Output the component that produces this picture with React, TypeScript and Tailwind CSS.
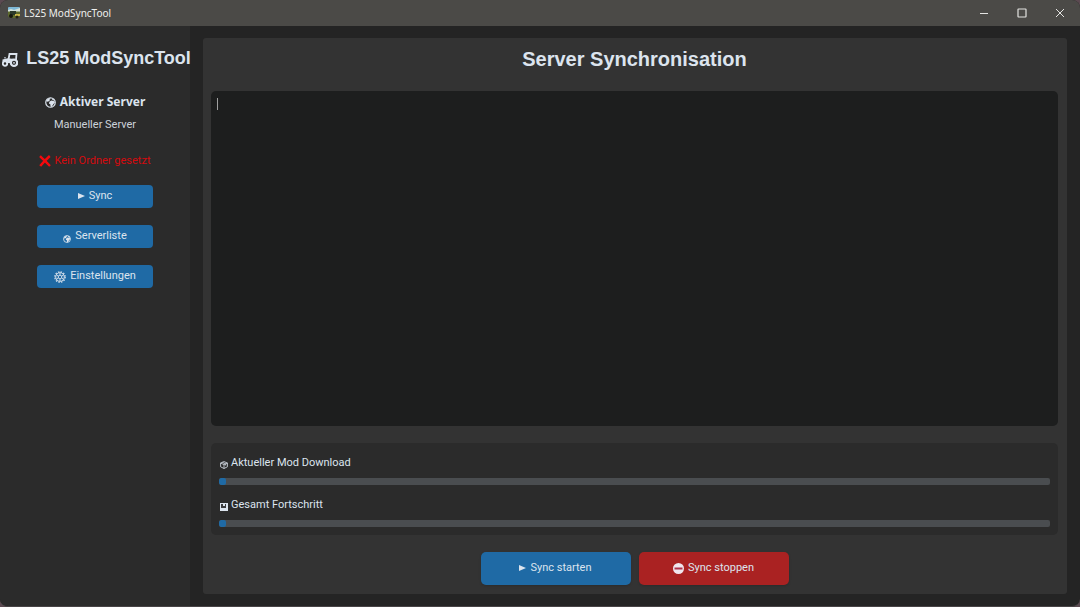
import { ReactNode } from "react";

type IconProps = {
	className?: string
}

function AppIcon() {
	return (
		<svg className="w-3 h-3 shrink-0" viewBox="0 0 12 12" aria-hidden="true">
			<rect x="0" y="0" width="12" height="7" rx="1" fill="#7fb9d6" />
			<path d="M0 3l3-1 3 1 6-2v4H0z" fill="#d5e3dc" />
			<path d="M0 4.500h12V9l-3 2H2L0 9z" fill="#5d6a2c" />
			<path d="M2 4h6v4H2z" fill="#2c3a2a" />
			<path d="M7 7h5v2H7z" fill="#c9b64a" />
			<circle cx="3" cy="9" r="2" fill="#17180f" />
			<circle cx="9" cy="10" r="1.500" fill="#262413" />
		</svg>
	)
}

function TractorIcon() {
	return (
		<svg className="w-4 h-4 shrink-0 mt-1" viewBox="0 0 16 16" fill="none" stroke="#dce4ee" aria-hidden="true">
			<path d="M6.500 7.500L7.500 2h7l-.5 6" strokeWidth="1.800" />
			<path d="M0.500 7.500L6 6.200l6 .8v4H6L3 10H0.500z" fill="#dce4ee" stroke="none" />
			<path d="M3 6.500V5" strokeWidth="1.200" />
			<circle cx="12" cy="10.800" r="3.200" fill="#2b2b2b" strokeWidth="2.200" />
			<circle cx="12" cy="10.800" r="0.900" fill="#dce4ee" stroke="none" />
			<circle cx="3" cy="11.600" r="2.200" fill="#2b2b2b" strokeWidth="1.900" />
		</svg>
	)
}

function GlobeIcon({ className }: IconProps) {
	return (
		<svg className={className} viewBox="0 0 12 12" aria-hidden="true">
			<circle cx="6" cy="6" r="5.2" fill="none" stroke="#dce4ee" strokeWidth="1.3" />
			<path d="M1.500 4C2.500 2 4 1 5.500 1l.8 1-1.500 1 .4 1.200-1.700.6L2 5.300z" fill="#dce4ee" />
			<path d="M5 4.800l2-.9 3.200.7.6 1.400-2 2.200-1.500 2.600-1.300-.4-.2-2.400-1.600-1z" fill="#dce4ee" />
			<path d="M7 1.200l2.600 1.200.9 1.800-2.300-.8z" fill="#dce4ee" />
		</svg>
	)
}

function CrossIcon() {
	return (
		<svg className="w-3 h-3 shrink-0" viewBox="0 0 12 12" aria-hidden="true">
			<path d="M1 1.200C4 4 8 8 11 11M10.800 1C7.500 4 4 7.500 1.200 11" fill="none" stroke="#f5090d" strokeWidth="2.400" />
		</svg>
	)
}

function PlayIcon() {
	return (
		<svg className="w-[7px] h-[7px] shrink-0" viewBox="0 0 7 7" aria-hidden="true">
			<path d="M0 0L7 3 0 6z" fill="#dce4ee" />
		</svg>
	)
}

function GearIcon() {
	return (
		<svg className="w-3 h-3 shrink-0" viewBox="0 0 12 12" fill="none" stroke="#dce4ee" aria-hidden="true">
			<circle cx="6" cy="6" r="5.2" strokeWidth="1.2" strokeDasharray="1.500 1.220" />
			<circle cx="6" cy="6" r="4.300" strokeWidth="0.9" />
			<circle cx="6" cy="6" r="1.800" strokeWidth="0.9" />
			<path d="M6 1.700v2.500M6 7.800v2.500M2.300 3.900l2.100 1.200M7.600 6.900l2.100 1.200M9.700 3.900L7.600 5.100M4.400 6.900L2.300 8.100" strokeWidth="0.9" />
		</svg>
	)
}

function PackageIcon() {
	return (
		<svg className="w-2 h-2 shrink-0 mt-[3px]" viewBox="0 0 8 8" fill="none" stroke="#c9d0d8" strokeWidth="0.9" aria-hidden="true">
			<path d="M4 0.600L7.400 2v3.800L4 7.500 0.600 5.800V2zM0.600 2L4 3.600 7.400 2M4 3.600v3.900M2.300 1.300l3.400 1.600v1.600" />
		</svg>
	)
}

function ChartIcon() {
	return (
		<svg className="w-2 h-2 shrink-0 mt-[3px]" viewBox="0 0 8 8" aria-hidden="true">
			<rect width="8" height="8" fill="#dce4ee" />
			<path d="M1 1h2v4H1zM3 3h2v2H3zM5 1h1v4H5z" fill="#3a3b3d" />
		</svg>
	)
}

function StopIcon() {
	return (
		<svg className="w-[11px] h-[11px] shrink-0" viewBox="0 0 11 11" aria-hidden="true">
			<circle cx="5.500" cy="5.500" r="5.500" fill="#f0e6ee" />
			<rect x="1.500" y="4.500" width="8" height="2" fill="#b0304a" />
		</svg>
	)
}

function TitleBar() {
	return (
		<header className="flex h-[26px] items-center justify-between bg-[#4b4a47] pl-2 pr-[15px]">
			<div className="flex items-center gap-1 font-['Noto_Sans',sans-serif] text-[10px] text-[#f0f0ee]">
				<AppIcon />
				<span>LS25 ModSyncTool</span>
			</div>
			<div className="flex items-center gap-7 text-[#e4e4e2]">
				<button type="button" aria-label="Minimieren">
					<svg className="w-[10px] h-[10px]" viewBox="0 0 10 10" stroke="currentColor"><path d="M1 5.500h8" /></svg>
				</button>
				<button type="button" aria-label="Maximieren">
					<svg className="w-[10px] h-[10px]" viewBox="0 0 10 10" fill="none" stroke="currentColor"><rect x="1" y="1" width="8" height="8" rx="0.500" strokeWidth="1.200" /></svg>
				</button>
				<button type="button" aria-label="Schließen">
					<svg className="w-[10px] h-[10px]" viewBox="0 0 10 10" stroke="currentColor"><path d="M1 1l8 8M9 1L1 9" /></svg>
				</button>
			</div>
		</header>
	)
}

type NavButtonProps = {
	icon: ReactNode
	label: string
}

function NavButton(props: NavButtonProps) {
	return (
		<button type="button" className="flex h-[23px] w-[116px] items-center justify-center gap-1 rounded-[4px] bg-[#1f6aa5] text-[11px] text-[#dce4ee]">
			{props.icon}
			<span>{props.label}</span>
		</button>
	)
}

function Sidebar() {
	return (
		<aside className="flex w-[190px] shrink-0 flex-col items-center bg-[#2b2b2b]">
			<h1 className="mt-5 flex items-center gap-2 whitespace-nowrap pl-[3px] font-['Liberation_Sans',sans-serif] text-lg font-bold leading-6 text-[#dce4ee]">
				<TractorIcon />
				LS25 ModSyncTool
			</h1>
			<h2 className="mt-6 flex items-center gap-1 font-['Noto_Sans',sans-serif] text-xs font-bold leading-4 text-[#dce4ee]">
				<GlobeIcon className="w-[11px] h-[11px] shrink-0" />
				Aktiver Server
			</h2>
			<p className="mt-[7px] text-[11px] leading-4 text-[#ccd2da]">Manueller Server</p>
			<p className="mt-5 flex items-center gap-[3px] text-[11px] leading-4 text-[#d40a0e]">
				<CrossIcon />
				Kein Ordner gesetzt
			</p>
			<nav className="mt-4 flex flex-col gap-[17px]">
				<NavButton icon={<PlayIcon />} label="Sync" />
				<NavButton icon={<GlobeIcon className="w-2 h-2 shrink-0 mt-1" />} label="Serverliste" />
				<NavButton icon={<GearIcon />} label="Einstellungen" />
			</nav>
		</aside>
	)
}

type ProgressProps = {
	id: string
	icon: ReactNode
	label: string
	value: number
}

function Progress(props: ProgressProps) {
	return (
		<div>
			<div id={props.id} className="flex items-center gap-[3px] pl-px text-[11px] leading-4 text-[#dce4ee]">
				{props.icon}
				{props.label}
			</div>
			<div role="progressbar" aria-labelledby={props.id} aria-valuenow={props.value} className="mt-[7px] h-[7px] overflow-hidden rounded-[2px] bg-[#4a4d50]">
				<div className="h-full min-w-[7px] rounded-[2px] bg-[#1f6aa5]" style={{ width: `${props.value}%` }} />
			</div>
		</div>
	)
}

export default function App() {
	return (
		<div className="min-h-screen bg-[#5b4a51]">
			<div className="flex min-h-screen flex-col overflow-hidden rounded-lg border-b border-[#484446] bg-[#242424] font-[Roboto,sans-serif]">
				<TitleBar />
				<div className="flex flex-1">
					<Sidebar />
					<main className="flex min-w-0 flex-1 pt-3 pr-[13px] pb-3 pl-[13px]">
						<section className="flex min-w-0 flex-1 flex-col rounded-[3px] bg-[#333333] pr-[9px] pb-[9px] pl-2">
							<h2 className="mt-[9px] text-center font-['Liberation_Sans',sans-serif] text-xl font-bold leading-6 text-[#dce4ee]">Server Synchronisation</h2>
							<div className="relative mt-5 flex flex-1">
								<textarea
									aria-label="Protokoll"
									className="block w-full resize-none rounded-[5px] bg-[#1d1e1e] px-[6px] py-1 text-xs text-[#dce4ee] caret-transparent outline-none"
								/>
								<span className="pointer-events-none absolute left-[6px] top-[7px] h-3 w-px bg-[#a0a0a0]" />
							</div>
							<div className="mt-[17px] flex flex-col gap-3 rounded-[5px] bg-[#2b2b2b] px-2 pt-3 pb-2">
								<Progress id="current" icon={<PackageIcon />} label="Aktueller Mod Download" value={0} />
								<Progress id="total" icon={<ChartIcon />} label="Gesamt Fortschritt" value={0} />
							</div>
							<div className="mt-[17px] flex justify-center gap-2">
								<button type="button" className="flex h-[33px] w-[150px] items-center justify-center gap-1 rounded-[5px] bg-[#1f6aa5] text-[11px] text-[#dce4ee] shadow-sm">
									<PlayIcon />
									Sync starten
								</button>
								<button type="button" className="flex h-[33px] w-[150px] items-center justify-center gap-1 rounded-[5px] bg-[#aa2222] text-[11px] text-[#dce4ee] shadow-sm">
									<StopIcon />
									Sync stoppen
								</button>
							</div>
						</section>
					</main>
				</div>
			</div>
		</div>
	)
}
